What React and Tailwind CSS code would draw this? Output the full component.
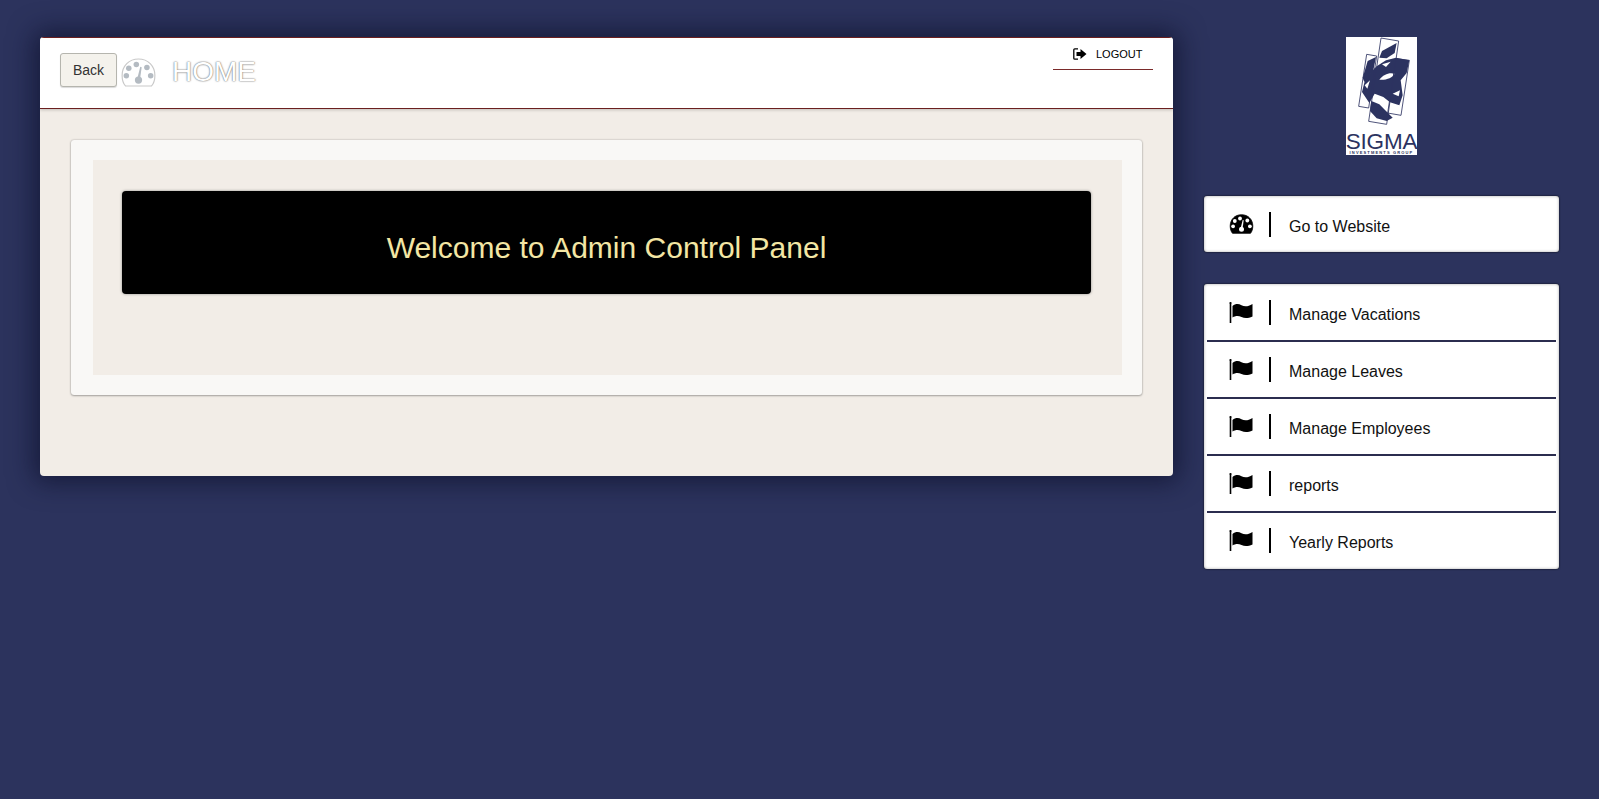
const font = { fontFamily: '"Liberation Sans", Arial, sans-serif' }

function GaugeIcon({ width, height, fill, stroke, dot }) {
  return (
    <svg width={width} height={height} viewBox="0 0 24 20">
      <path d="M12 0.700C5.500 0.700 0.700 5.500 0.700 12C0.700 15 1.500 17.500 3 19.300H21C22.500 17.500 23.300 15 23.300 12C23.300 5.500 18.500 0.700 12 0.700Z" fill={fill} stroke={stroke} strokeWidth="0.800" />
      <g fill={dot}>
        <circle cx="10.500" cy="4.500" r="1.900" />
        <circle cx="5.300" cy="7" r="1.900" />
        <circle cx="17.800" cy="6.500" r="1.900" />
        <circle cx="3.600" cy="12.300" r="1.900" />
        <circle cx="20.400" cy="12.300" r="1.900" />
        <path d="M13.200 6L14.200 6.300L13.200 13.500L11.400 13.300Z" />
        <circle cx="12" cy="15.200" r="2.500" />
      </g>
    </svg>
  )
}

function FlagIcon() {
  return (
    <svg width="24" height="21" viewBox="0 0 24 21" fill="#000">
      <rect x="0.700" y="0.500" width="1.600" height="20.500" />
      <circle cx="1.500" cy="1" r="1" />
      <path d="M3.500 4C6.500 1.500 9.500 1.500 12.500 3.200C15.500 4.800 19 4.800 23.500 2V14.500C19 16.500 15.500 16.500 12.500 15C9.500 13.500 6.500 13.500 3.500 15.500Z" />
    </svg>
  )
}

function LogoutIcon() {
  return (
    <svg width="14" height="12" viewBox="0 0 14 12" fill="#000">
      <path d="M5 0.800H1.800Q0.800 0.800 0.800 1.800V10.200Q0.800 11.200 1.800 11.200H5" fill="none" stroke="#000" strokeWidth="1.300" />
      <path d="M3.500 4H7.500V1L13.500 6L7.500 11V8H3.500Z" />
    </svg>
  )
}

function Logo() {
  return (
    <div className="flex h-[118px] w-[71px] flex-col items-center overflow-hidden bg-white text-[#2c3360]">
      <svg width="72" height="95" viewBox="0 0 216 285" className="shrink-0">
        <g fill="#2c3360">
          <path d="M108 42L152 18L146 48L122 64L100 62Z" />
          <path d="M65 72L90 60L82 100L55 135L50 122Z" />
          <path d="M92 88L120 70L150 62L190 70L182 108L164 130L170 175L160 205L132 196L112 180L86 170L70 198L48 165L58 125L78 102Z" />
          <path d="M76 192L100 202L140 242L122 252L92 244L72 222Z" />
        </g>
        <g fill="#fff">
          <path d="M100 128C112 112 130 105 146 110C140 122 120 130 100 128Z" />
          <path d="M56 145L72 130L64 155Z" />
          <path d="M108 82L134 74L120 90Z" />
          <path d="M140 170L162 160L158 178Z" />
        </g>
        <g fill="none" stroke="#2c3360" strokeWidth="2.500">
          <path d="M62 52L92 57L68 213L38 208Z" />
          <path d="M105 3L158 12L122 262L68 253Z" />
          <path d="M150 65L190 70L165 235L125 228Z" />
        </g>
      </svg>
      <div className="mt-[1px] text-[22.500px] leading-[17px] tracking-[-0.2px]">SIGMA</div>
      <div className="whitespace-nowrap text-[4px] leading-[5px] font-bold tracking-[1.150px]">INVESTMENTS GROUP</div>
    </div>
  )
}

function MenuRow({ icon, label, height }) {
  return (
    <div className={`mx-[3px] flex items-center ${height}`}>
      <div className="flex w-[62px] justify-center pl-[6px]">{icon}</div>
      <div className="h-[25px] w-[2px] bg-black" />
      <span className="ml-[18px] pt-[6px] text-[16px] text-[#111]">{label}</span>
    </div>
  )
}

const manageItems = ['Manage Vacations', 'Manage Leaves', 'Manage Employees', 'reports', 'Yearly Reports']

export default function App() {
  return (
    <div style={font} className="min-h-[799px] bg-[#2c335d]">
      <div className="flex items-start pt-[37px] pl-[40px]">
        <div className="h-[439px] w-[1133px] overflow-hidden rounded-[4px] bg-[#f2ede7] shadow-[0_0_26px_6px_rgba(10,14,40,0.65)]">
          <div className="flex h-[72px] items-start justify-between border-y border-y-[#6b1f1f] bg-white pt-[15px] pl-[20px] shadow-[0_1px_3px_rgba(0,0,0,0.2)]">
            <div className="flex items-start">
              <button className="h-[34px] w-[57px] rounded-[3px] border border-[#b5b5ae] bg-[#f4f2ec] text-[14px] text-[#333] shadow-[0_1px_1px_rgba(0,0,0,0.15)]">Back</button>
              <div className="mt-[5px] ml-[4px]">
                <GaugeIcon width={35} height={29} fill="#fff" stroke="#c9c9c9" dot="#b4bbc2" />
              </div>
              <span className="mt-[5px] ml-[16px] text-[28px] leading-none text-white [text-shadow:0_0_2px_#777,0_0_1px_#777]">HOME</span>
            </div>
            <div className="mt-[-15px] mr-[20px] flex h-[32px] w-[100px] items-center gap-[9px] border-b border-b-[#7a2a2a] pt-[1px] pl-[20px] text-[11px] text-black">
              <LogoutIcon />
              <span>LOGOUT</span>
            </div>
          </div>
          <div className="mt-[31px] ml-[31px] h-[255px] w-[1071px] rounded-[3px] bg-[#f9f8f6] pt-[20px] pr-[20px] pl-[22px] shadow-[0_0_2px_rgba(0,0,0,0.3),0_1px_2px_rgba(0,0,0,0.25)]">
            <div className="h-[215px] w-[1029px] bg-[#f2ede7] pt-[31px] pl-[29px]">
              <div className="flex h-[103px] w-[969px] items-center justify-center rounded-[4px] bg-black pt-[9px] text-[30px] text-[#f3e6a4] shadow-[0_0_3px_rgba(0,0,0,0.4)]">
                Welcome to Admin Control Panel
              </div>
            </div>
          </div>
        </div>

        <div className="ml-[31px] flex w-[355px] flex-col">
          <div className="flex justify-center">
            <Logo />
          </div>
          <div className="mt-[41px] rounded-[3px] bg-white shadow-[0_0_2px_rgba(0,0,0,0.9),inset_0_0_3px_rgba(0,0,0,0.35)]">
            <MenuRow icon={<GaugeIcon width={25} height={20} fill="#000" stroke="#000" dot="#fff" />} label="Go to Website" height="h-[56px]" />
          </div>
          <div className="mt-[32px] rounded-[3px] bg-white py-[1px] shadow-[0_0_2px_rgba(0,0,0,0.9),inset_0_0_3px_rgba(0,0,0,0.35)]">
            {manageItems.map((item, i) => (
              <div key={item}>
                {i > 0 && <div className="mx-[3px] h-[2px] bg-[#2b2d4f]" />}
                <MenuRow icon={<FlagIcon />} label={item} height="h-[55px] pb-[1px]" />
              </div>
            ))}
          </div>
        </div>
      </div>
    </div>
  )
}
